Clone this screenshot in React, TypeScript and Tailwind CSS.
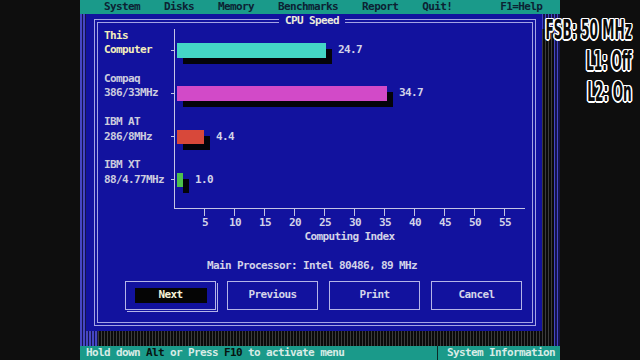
import React from "react";

type Bar = { l1: string; l2: string; v: number; color: string; hl: boolean };

const bars: Bar[] = [
  { l1: "This", l2: "Computer", v: 24.7, color: "bg-[#44d6c6]", hl: true },
  { l1: "Compaq", l2: "386/33MHz", v: 34.7, color: "bg-[#d24ac8]", hl: false },
  { l1: "IBM AT", l2: "286/8MHz", v: 4.4, color: "bg-[#d8483a]", hl: false },
  { l1: "IBM XT", l2: "88/4.77MHz", v: 1.0, color: "bg-[#4cc24c]", hl: false },
];

const ticks = [5, 10, 15, 20, 25, 30, 35, 40, 45, 50, 55];

function Chart() {
  return (
    <div className="flex pl-[6px]">
      <div className="w-[70px] shrink-0">
        {bars.map((b) => (
          <div key={b.l2} className={b.hl ? "text-[#f4eebc]" : "text-[#ccccdf]"}>
            <div className="h-[14.4px] whitespace-pre">{b.l1}</div>
            <div className="h-[14.4px] flex items-center justify-between">
              <span className="whitespace-pre">{b.l2}</span>
              <span className="w-[3px] h-px bg-[#c4c4e4]" />
            </div>
            <div className="h-[14.4px]" />
          </div>
        ))}
      </div>
      <div className="w-[351px] shrink-0 border-l border-b border-[#c4c4e4]">
        {bars.map((b) => (
          <div key={b.l2}>
            <div className="h-[14.4px]" />
            <div className="h-[14.4px] flex items-center pl-[2px]">
              <div
                className={`h-full shadow-[6px_6px_0_0_#04040a] ${b.color}`}
                style={{ width: Math.round(b.v * 6.05) }}
              />
              <span className="ml-[12px] text-[#d2d2e8]">{b.v.toFixed(1)}</span>
            </div>
            <div className="h-[14.4px]" />
          </div>
        ))}
        <div className="h-[7px]" />
      </div>
    </div>
  );
}

function Button({ label, active }: { label: string; active?: boolean }) {
  return (
    <div
      className={
        active
          ? "w-[91px] h-[29.8px] border border-[#b4b4e8] flex items-center justify-center shadow-[1px_1px_0_0_#12129e,2px_2px_0_0_#b4b4e8]"
          : "w-[91px] h-[29.8px] border border-[#b4b4e8] flex items-center justify-center"
      }
    >
      {active ? (
        <div className="w-[72px] h-[14.4px] bg-[#050505] text-center text-[#f6f2d8]">{label}</div>
      ) : (
        <div className="h-[14.4px] text-center text-[#d4d4ea]">{label}</div>
      )}
    </div>
  );
}

function Dialog() {
  return (
    <div className="relative ml-[6px] w-[456px] h-[316.8px]">
      <div className="absolute left-[12px] top-[14.4px] w-full h-full bg-[image:repeating-linear-gradient(90deg,#3c3c3c_0px,#3c3c3c_1px,#0a0a0a_1px,#0a0a0a_3px)]" />
      <div className="relative w-full h-full bg-[#12129e] pt-[4.6px] pl-[8px] pr-[6px] pb-[5.2px]">
        <div className="h-full border border-[#a4a4e4] p-[2px]">
          <div className="h-full border border-[#a4a4e4] flex flex-col">
            <div className="h-[5.8px]" />
            <Chart />
            <div className="ml-[77px] flex h-[6.4px]">
              {ticks.map((t) => (
                <div key={t} className="w-[30px] h-full border-r border-[#c4c4e4]" />
              ))}
            </div>
            <div className="ml-[77px] pl-[15px] flex h-[14.4px] text-[#d2d2e8]">
              {ticks.map((t) => (
                <div key={t} className="w-[30px] text-center">
                  {t}
                </div>
              ))}
            </div>
            <div className="ml-[76px] w-[351px] h-[14.4px] text-center text-[#d2d2e8]">Computing Index</div>
            <div className="h-[14.4px]" />
            <div className="h-[14.4px] text-center pr-[6px] text-[#d2d2e8]">Main Processor: Intel 80486, 89 MHz</div>
            <div className="h-[7.2px]" />
            <div className="flex gap-[11px] ml-[27px]">
              <Button label="Next" active />
              <Button label="Previous" />
              <Button label="Print" />
              <Button label="Cancel" />
            </div>
          </div>
        </div>
        <div className="absolute left-[193px] top-0 h-[14.4px] bg-[#12129e] px-[6px] text-[#eaeadc] whitespace-pre">
          CPU Speed
        </div>
      </div>
    </div>
  );
}

export default function App() {
  return (
    <div className="relative flex w-[640px] h-[360px] overflow-hidden bg-[#0e0e0e] font-['DejaVu_Sans_Mono',monospace] font-bold text-[11px] leading-[14.4px] tracking-[-0.62px]">
      <div className="w-[80px] shrink-0" />
      <div className="flex w-[480px] shrink-0 flex-col">
        <div className="h-[14.4px] bg-[#1a9a8a] text-[#0c2233] whitespace-pre">
          {"    System    Disks    Memory    Benchmarks    Report    Quit!        F1=Help"}
        </div>
        <div className="h-[331.2px] bg-[image:repeating-linear-gradient(90deg,#4646c4_0px,#4646c4_1.5px,#14144a_1.5px,#14144a_3px)]">
          <Dialog />
        </div>
        <div className="flex h-[14.4px] bg-[#1a9a8a] text-[#d8ece6]">
          <div className="w-[357px] whitespace-pre">
            {" Hold down "}
            <span className="text-[#07140f]">Alt</span>
            {" or Press "}
            <span className="text-[#07140f]">F10</span>
            {" to activate menu"}
          </div>
          <div className="w-px bg-[#0b2a26]" />
          <div className="pl-[9px] whitespace-pre">System Information</div>
        </div>
      </div>
      <div className="flex-1" />
      <div className="absolute right-[8px] top-[14.5px] flex flex-col items-end origin-right scale-x-[0.47] font-['DejaVu_Sans',sans-serif] font-bold text-[26px] leading-[31px] tracking-normal text-[#0a0a0a] [text-shadow:3px_0_0_#fff,-3px_0_0_#fff,0_1.5px_0_#fff,0_-1.5px_0_#fff,2px_1px_0_#fff,-2px_1px_0_#fff,2px_-1px_0_#fff,-2px_-1px_0_#fff]">
        <div className="whitespace-pre">FSB: 50 MHz</div>
        <div className="whitespace-pre">L1: Off</div>
        <div className="whitespace-pre">L2: On</div>
      </div>
    </div>
  );
}
